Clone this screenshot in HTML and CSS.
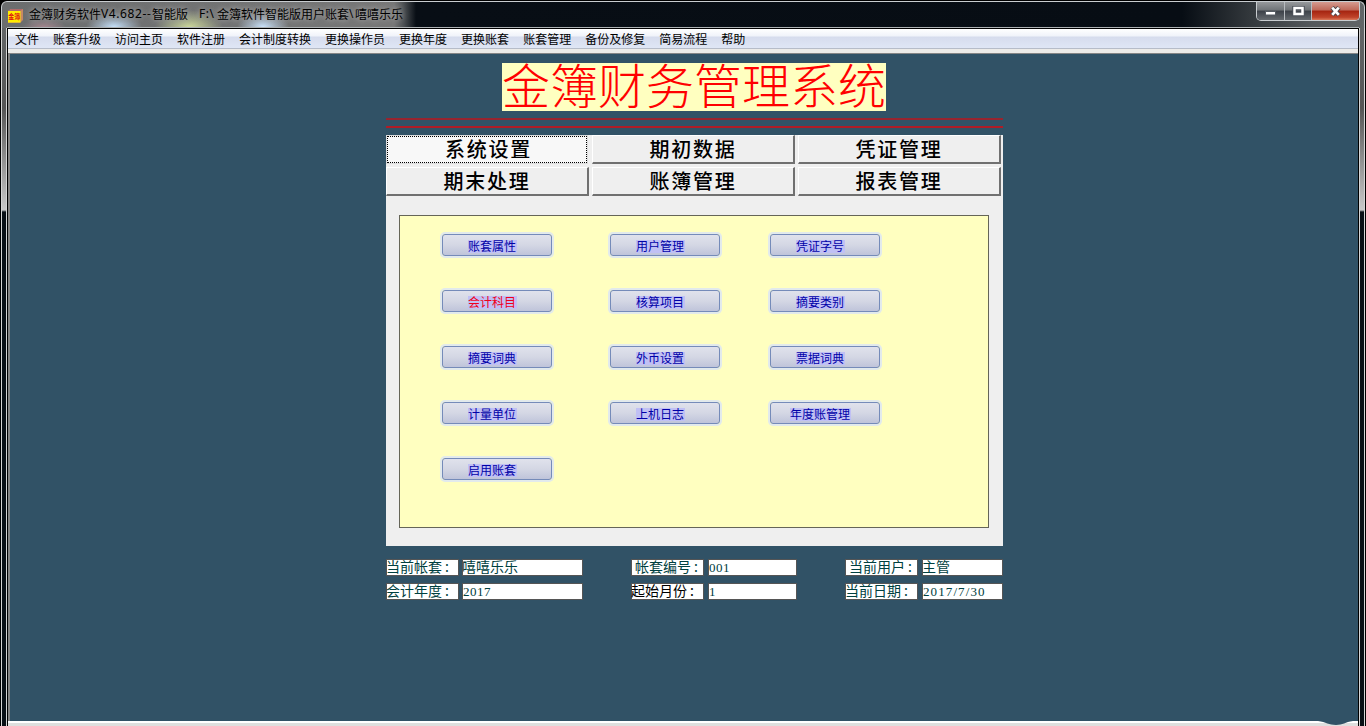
FILE: index.html
```
<!DOCTYPE html>
<html lang="zh-CN">
<head>
    <meta charset="UTF-8">
    <title>金簿财务软件</title>
    <link rel="stylesheet" href="styles.css">
</head>
<body>
    <div class="window">
        <div class="titlebar">
            <svg class="app-icon" width="15" height="14" viewBox="0 0 15 14">
                <path d="M0 2L3 0H15V11L12 14H0Z" fill="#c98a62"/>
                <path d="M0 2L3 0H15L12 2Z" fill="#b06a6a"/>
                <rect x="0" y="2" width="12.5" height="11.5" fill="#ffee00"/>
                <text x="0.2" y="9.8" textLength="12" lengthAdjust="spacingAndGlyphs">金簿</text>
            </svg>
            <div class="title-text">金簿财务软件<span class="latin">V4.682--</span>智能版<span class="path">F:\</span>金簿软件智能版用户账套<span class="slash">\</span>嘻嘻乐乐</div>
            <div class="controls">
                <div class="ctl ctl-min"><svg width="11" height="5"><rect x=".5" y=".5" width="10" height="3.5" fill="#fff" stroke="#555b62"/></svg></div>
                <div class="ctl ctl-max"><svg width="13" height="11"><rect x="2.5" y="2" width="8" height="6" fill="none" stroke="#4c525a" stroke-width="4.5"/><rect x="2.5" y="2" width="8" height="6" fill="none" stroke="#fff" stroke-width="2.5"/></svg></div>
                <div class="ctl ctl-close"><svg width="13" height="11"><path d="M3 1.5L10 9M10 1.5L3 9" stroke="#4c464b" stroke-width="4.6"/><path d="M3.2 1.7L9.8 8.8M9.8 1.7L3.2 8.8" stroke="#fff" stroke-width="2.7"/></svg></div>
            </div>
        </div>
        <div class="frame">
            <div class="side side-left"></div>
            <div class="client">
                <div class="menu">
                    <span>文件</span>
                    <span>账套升级</span>
                    <span>访问主页</span>
                    <span>软件注册</span>
                    <span>会计制度转换</span>
                    <span>更换操作员</span>
                    <span>更换年度</span>
                    <span>更换账套</span>
                    <span>账套管理</span>
                    <span>备份及修复</span>
                    <span>简易流程</span>
                    <span>帮助</span>
                </div>
                <div class="workspace">
                    <h1 class="banner">金簿财务管理系统</h1>
                    <div class="line line-top"></div>
                    <div class="line"></div>
                    <div class="panel">
                        <div class="tabs">
                            <div class="tab active">系统设置</div>
                            <div class="tab">期初数据</div>
                            <div class="tab">凭证管理</div>
                            <div class="tab">期末处理</div>
                            <div class="tab">账簿管理</div>
                            <div class="tab">报表管理</div>
                        </div>
                        <div class="page">
                            <button class="btn"><span>账套属性</span></button>
                            <button class="btn"><span>用户管理</span></button>
                            <button class="btn"><span>凭证字号</span></button>
                            <button class="btn hot"><span>会计科目</span></button>
                            <button class="btn"><span>核算项目</span></button>
                            <button class="btn"><span>摘要类别</span></button>
                            <button class="btn"><span>摘要词典</span></button>
                            <button class="btn"><span>外币设置</span></button>
                            <button class="btn"><span>票据词典</span></button>
                            <button class="btn"><span>计量单位</span></button>
                            <button class="btn"><span>上机日志</span></button>
                            <button class="btn wide"><span>年度账管理</span></button>
                            <button class="btn"><span>启用账套</span></button>
                        </div>
                    </div>
                    <div class="status">
                        <div class="field">当前帐套<span class="colon">:</span></div>
                        <div class="field">嘻嘻乐乐</div>
                        <div class="field indent">帐套编号<span class="colon">:</span></div>
                        <div class="field num">001</div>
                        <div class="field indent">当前用户<span class="colon">:</span></div>
                        <div class="field">主管</div>
                        <div class="field">会计年度<span class="colon">:</span></div>
                        <div class="field num">2017</div>
                        <div class="field black">起始月份<span class="colon">:</span></div>
                        <div class="field num">1</div>
                        <div class="field">当前日期<span class="colon">:</span></div>
                        <div class="field num date">2017/7/30</div>
                    </div>
                </div>
                <div class="bottom">
                    <svg class="bump" width="40" height="6"><path d="M0 0H35C27 1 25 4 18 4S8 1 0 0Z" fill="#315266"/></svg>
                </div>
            </div>
            <div class="side side-right"></div>
        </div>
    </div>
</body>
</html>
```
FILE: styles.css
```
* { box-sizing: border-box; }
body { margin: 0; background: #000; font-family: "Noto Sans CJK SC", sans-serif; overflow: hidden; }
.window { width: 1366px; height: 726px; padding: 1px 1px 0; display: flex; flex-direction: column; }

.titlebar { height: 27px; flex: none; display: flex; align-items: flex-start; border: 1px solid #c9cdd0; border-bottom: 0; border-radius: 6px 6px 0 0; padding-left: 6px; overflow: hidden;
    background:
        radial-gradient(ellipse 28px 15px at 112px 25px, #c4dff8, transparent),
        radial-gradient(ellipse 34px 17px at 187px 25px, #cbd79b, transparent),
        radial-gradient(ellipse 26px 17px at 261px 25px, #cae2fa, transparent),
        radial-gradient(ellipse 22px 10px at 42px 26px, #a88791, transparent),
        linear-gradient(90deg, #6b6d6e 0, #777 392px, #4a4e51 402px, #080e15 414px, #070d14 1180px, #34393d 1250px, #55595c 1310px, #626567 100%); }
.app-icon { margin-top: 7px; }
.app-icon text { font-size: 7px; font-weight: bold; fill: #e01010; }
.title-text { display: flex; font-size: 12px; line-height: 18px; margin: 3px 0 0 6px; white-space: nowrap; color: #000; text-shadow: 0 0 5px #aaa, 0 0 8px #999; }
.title-text span { font-family: "Noto Sans", sans-serif; }
.title-text .latin { width: 51px; letter-spacing: .6px; }
.title-text .path { width: 18px; margin-left: 11px; letter-spacing: .5px; }
.title-text .slash { width: 6px; }
.controls { display: flex; height: 19px; margin-left: auto; margin-right: 4px; border: 1px solid #c9cdd0; border-top: 0; border-radius: 0 0 5px 5px; overflow: hidden; }
.ctl { display: flex; align-items: center; justify-content: center; border-right: 1px solid #b8bcc0; background: linear-gradient(#96999c 0, #707478 45%, #3c4148 50%, #656a6f 100%); }
.ctl-min { width: 28px; padding-top: 4px; }
.ctl-max { width: 27px; }
.ctl-close { width: 47px; border: 0; background: linear-gradient(#d59b90 0, #bf6858 45%, #a52410 50%, #c0442a 85%, #db7c5c 100%); }

.frame { flex: 1; display: flex; min-height: 0; }
.side { flex: none; background: linear-gradient(#626567 0, #555 80px, #777 110px, #c8c8c8 182px, #0a1016 184px); border: solid #d5d5d5; border-width: 0 1px; }
.side-left { width: 6px; }
.side-right { width: 6px; }
.client { flex: 1; min-width: 0; border: solid #000; border-width: 1px 1px 0; box-shadow: 0 -1px #aeb2b4; display: flex; flex-direction: column; background: #ecebe8; }
.menu { height: 20px; flex: none; display: flex; gap: 14px; padding-left: 7px; border-bottom: 1px solid #b6bcc8; background: linear-gradient(#fff 0, #f0f3fa 7px, #d6dced 8px, #dfe6f5 100%); }
.menu span { font-size: 12px; line-height: 20px; white-space: nowrap; color: #000; }
.workspace { margin-top: 4px; flex: 1; min-height: 0; background: #315266; border: solid #858585; border-width: 1px 0 0 2px; padding: 9px 0 0 376px; }

.banner { margin: 0 0 0 116px; width: 384px; height: 48px; font-size: 48px; line-height: 41px; font-weight: 300; color: #f00; background: #ffffc0; white-space: nowrap; }
.line { width: 617px; height: 2px; margin-top: 6px; background: #b01c26; }
.line-top { margin-top: 7px; background: #98242f; }
.panel { width: 617px; height: 411px; margin-top: 7px; background: #efefef; }
.tabs { display: grid; grid-template-columns: repeat(3, 203px); grid-template-rows: 29px 29px; gap: 3px; }
.tab { font-size: 20px; font-weight: 500; letter-spacing: 1.8px; line-height: 25px; text-align: center; color: #000; background: #efefef; border: solid; border-width: 1px 2px 2px 1px; border-color: #fff #707070 #707070 #fff; }
.tab.active { background: #f8f8f8; border: 1px dotted #000; margin: 1px 2px 1px 1px; padding-left: 3px; line-height: 23px; box-shadow: 0 0 0 1px #ddd; }
.page { width: 590px; height: 313px; margin: 19px 0 0 13px; padding: 18px 0 0 42px; background: #ffffc0; border: 1px solid #656558; display: grid; grid-template-columns: 168px 160px 110px; grid-template-rows: repeat(5, 22px); row-gap: 34px; }
.btn { width: 110px; height: 22px; padding: 2px 0 0 25px; border: 1px solid #758bb9; border-radius: 3px; background: linear-gradient(#e0e2ec, #d4d7e4 50%, #bfc4da); box-shadow: 0 0 0 2px #e2eaec; display: flex; align-items: center; color: #0000a8; font-family: inherit; font-size: 12px; }
.btn span { height: 13px; line-height: 12px; padding-right: 1px; background: #c0c0f4; white-space: nowrap; }
.btn.hot { color: #f0001c; }
.btn.wide { padding-left: 19px; }

.status { display: grid; grid-template-columns: 76px 169px 77px 137px 77px 81px; grid-template-rows: 17px 17px; row-gap: 7px; margin-top: 13px; width: 617px; }
.field { width: 73px; height: 17px; border: 1px solid #555; background: #fff; color: #004040; font-size: 14px; line-height: 13px; text-indent: -1px; white-space: nowrap; }
.field:nth-child(6n+2) { width: 121px; }
.field:nth-child(6n+4) { width: 89px; }
.field:nth-child(6n) { width: 81px; }
.colon { margin-left: 3px; }
.indent { padding-left: 4px; }
.num { font-family: "Liberation Serif", serif; font-size: 13px; line-height: 16px; letter-spacing: .5px; text-indent: 0; }
.date { letter-spacing: 1.1px; }
.black { color: #000; }

.bottom { position: relative; height: 5px; flex: none; background: #dfdfde; border-top: 2px solid #fff; }
.bump { position: absolute; right: 0; top: -2px; }
```
